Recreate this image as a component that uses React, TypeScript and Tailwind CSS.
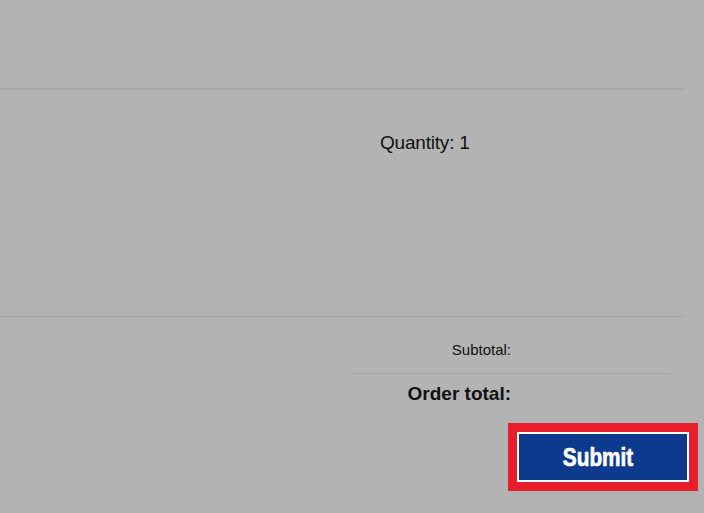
export default function App() {
  return (
    <div
      className="w-[704px] h-[513px] overflow-hidden bg-[#b3b3b3] text-[#111]"
      style={{ fontFamily: '"Liberation Sans", Arial, sans-serif' }}
    >
      <div className="h-[88px]" />
      <div className="w-[683px] border-t-2 border-[#a8a8a8]" />

      {/* Item row */}
      <div className="h-[226px] pl-[380px] pt-[41px]">
        <p className="text-[19px] leading-[23px] tracking-[-0.2px]">Quantity: 1</p>
      </div>
      <div className="w-[683px] border-t border-[#a3a3a3]" />

      {/* Totals */}
      <div className="flex flex-col items-start pl-[352px]">
        <div className="w-[159px] pt-[24px] text-right text-[15px] leading-[18px]">Subtotal:</div>
        <div className="mt-[14px] w-[318px] border-t border-[#a3a3a3]" />
        <div className="w-[159px] pt-[8px] text-right text-[19px] font-bold leading-[23px]">
          Order total:
        </div>
        <div className="ml-[156px] mt-[18px] bg-[#e81f2b] p-[9px]">
          <button className="flex h-[50px] w-[172px] items-center justify-center border-2 border-white bg-[#0d3a8d] pr-[10px] text-white">
            <span className="inline-block scale-x-[0.8] text-[26px] font-bold leading-none [-webkit-text-stroke:0.7px_white]">
              Submit
            </span>
          </button>
        </div>
      </div>
    </div>
  );
}
